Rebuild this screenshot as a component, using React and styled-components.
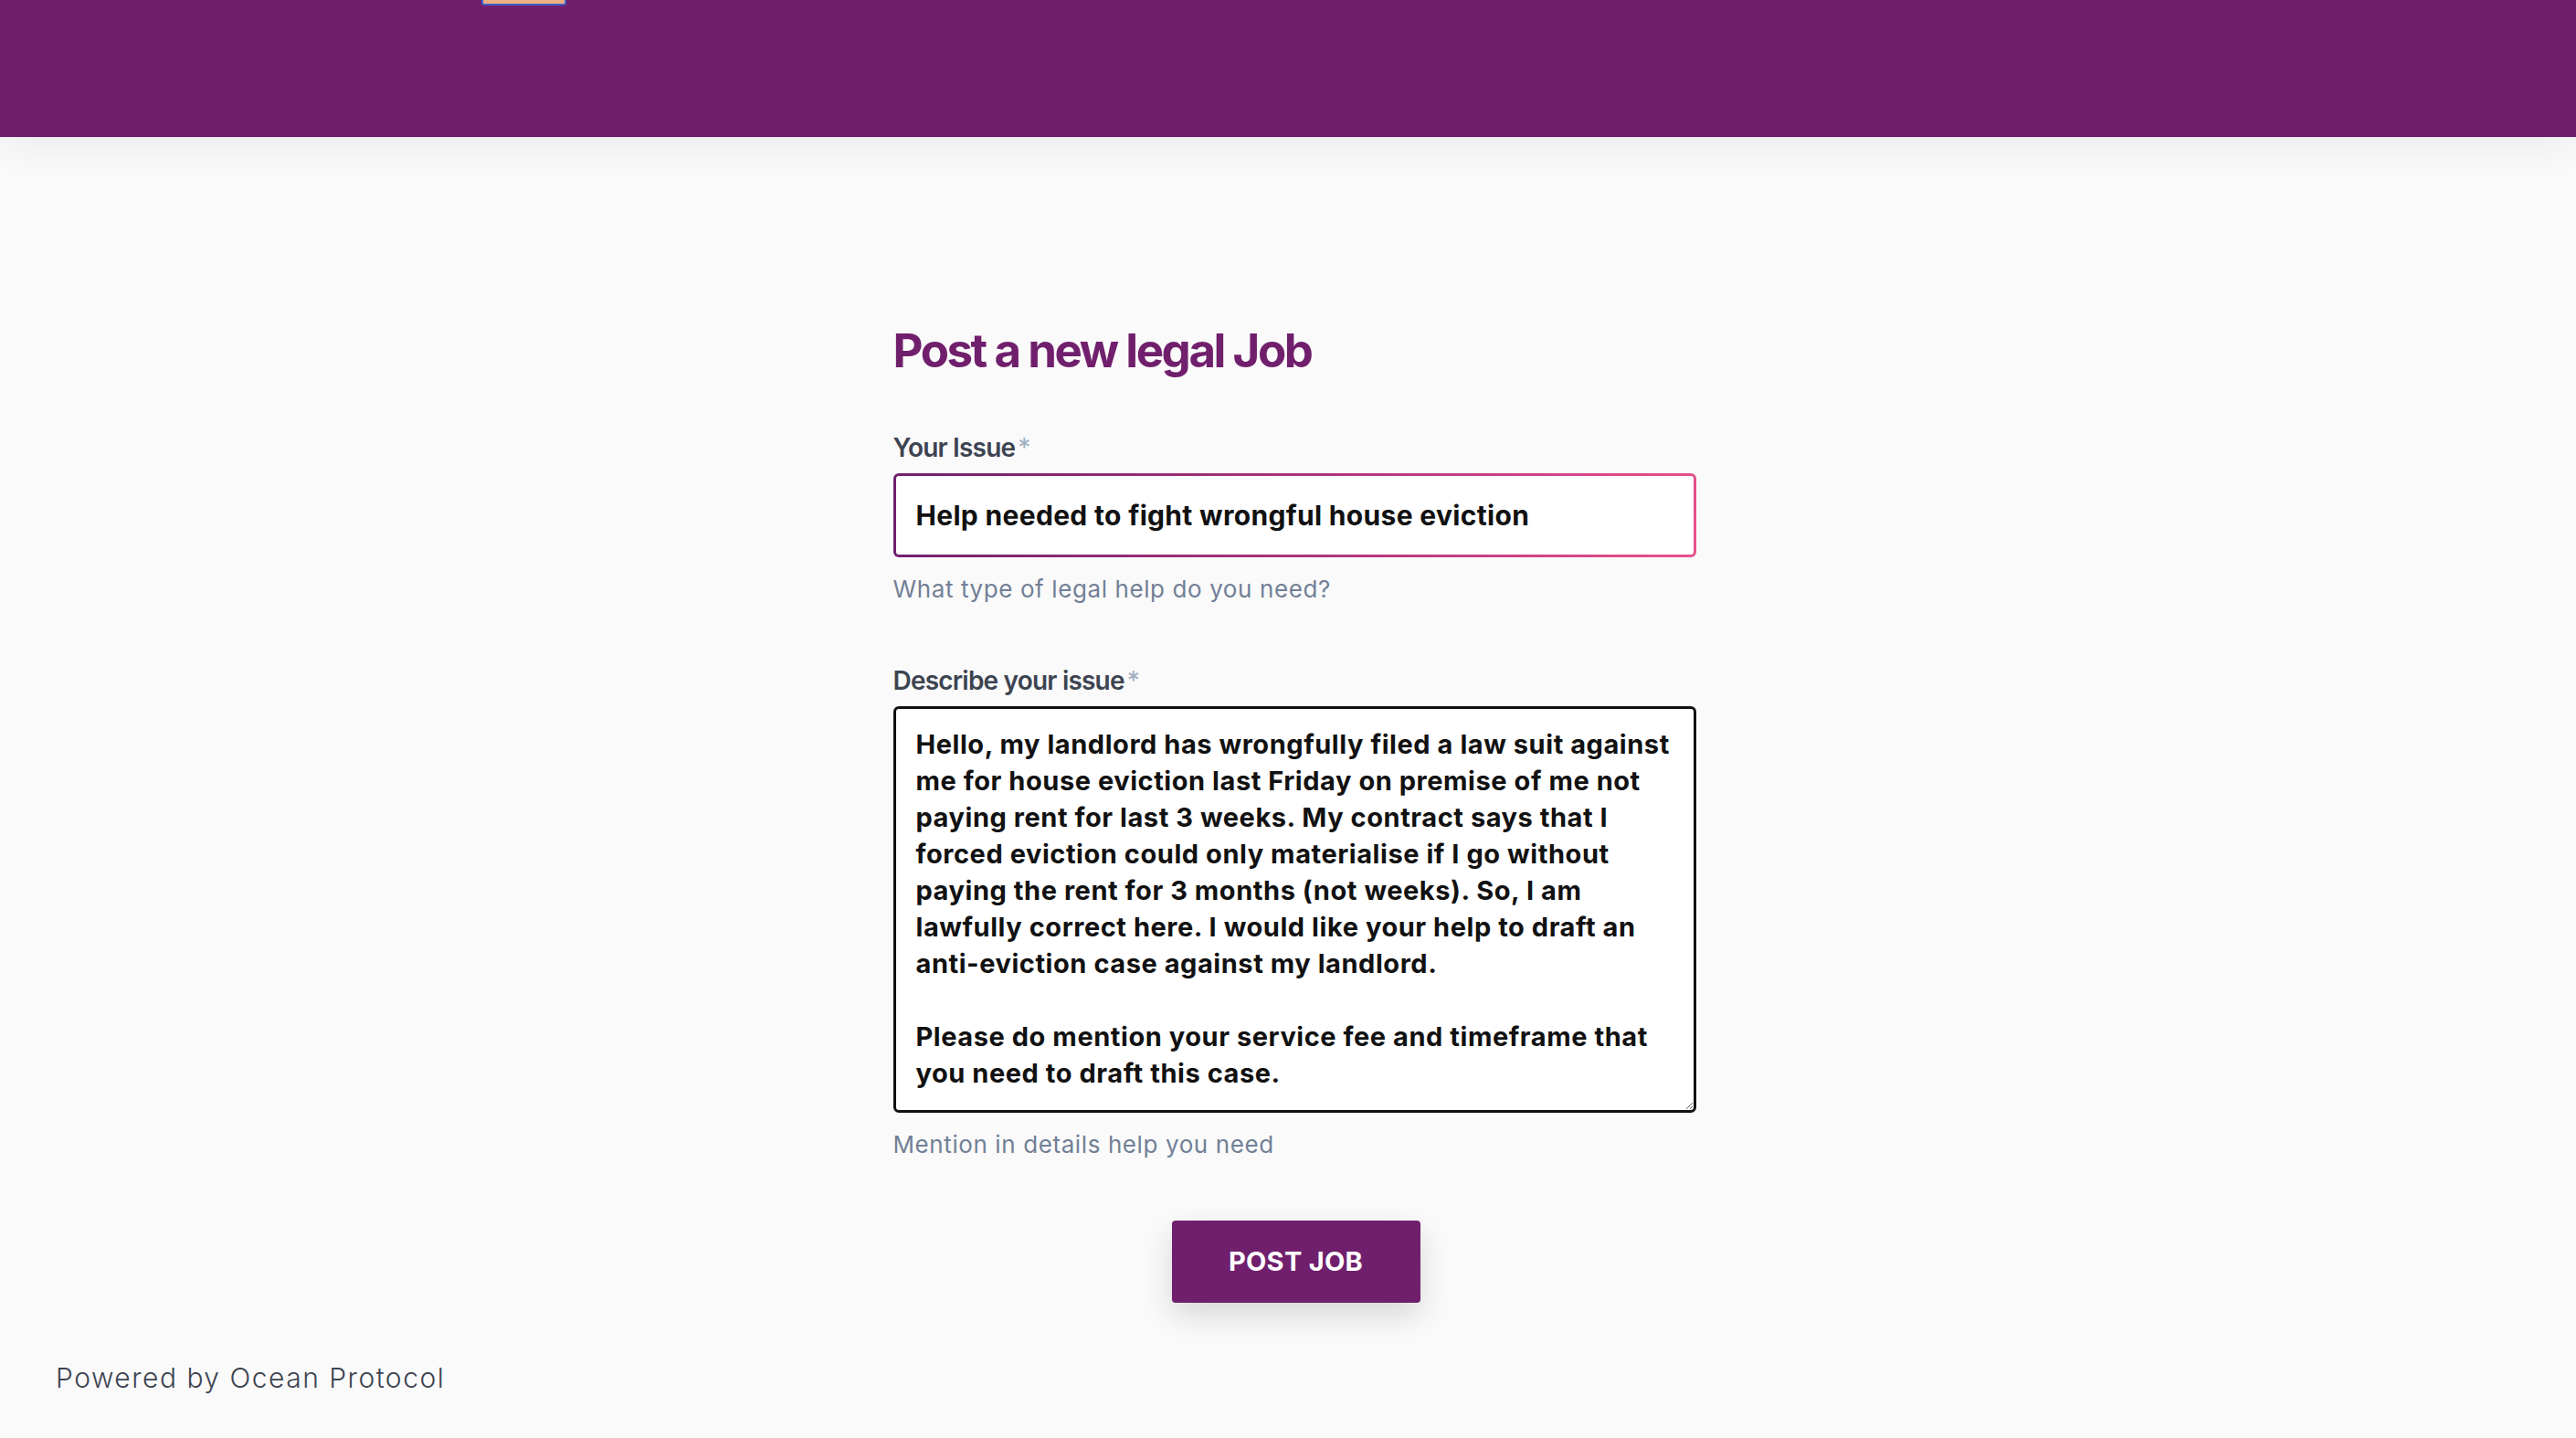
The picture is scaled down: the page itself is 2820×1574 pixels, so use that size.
import React from "react";
import styled, { createGlobalStyle } from "styled-components";

const Global = createGlobalStyle`
  html, body { margin: 0; padding: 0; }
  body {
    background: #fafafa;
    font-family: Inter, Lato, "Noto Sans", sans-serif;
    color: #1a1a1a;
  }
  * { box-sizing: border-box; }
`;

const Page = styled.div`
  min-height: 1574px;
  display: flex;
  flex-direction: column;
`;

const Header = styled.header`
  height: 150px;
  background: #701f6d;
  box-shadow: 0 12px 40px rgba(0, 0, 0, 0.06);
  display: flex;
  align-items: flex-start;
  position: relative;
  z-index: 1;
`;

const FocusedNav = styled.div`
  margin-left: 527px;
  width: 93px;
  height: 6px;
  border: 2px solid #3f62c7;
  border-top: none;
  border-radius: 0 0 3px 3px;
  background: #efb184;
`;

const Main = styled.main`
  flex: 1;
  display: flex;
  justify-content: center;
  padding: 203px 0 0 14px;
`;

const Form = styled.form`
  width: 879px;
  display: flex;
  flex-direction: column;
`;

const Title = styled.h1`
  margin: 0 0 59px;
  font-size: 51px;
  line-height: 1.2;
  font-weight: 700;
  color: #701f6d;
  letter-spacing: -2.45px;
`;

const Field = styled.div`
  display: flex;
  flex-direction: column;
  margin-bottom: ${(p) => p.$gap || 0}px;
`;

const Label = styled.label`
  font-size: 28px;
  line-height: 1.25;
  font-weight: 600;
  color: #3d4451;
  margin-bottom: 10px;
  letter-spacing: -0.8px;
`;

const Star = styled.span`
  color: #a0aec0;
  font-weight: 400;
  margin-left: 3px;
`;

const TextInput = styled.input`
  height: 92px;
  width: 100%;
  padding: 0 22px;
  border: 3px solid transparent;
  border-radius: 6px;
  background: linear-gradient(#ffffff, #ffffff) padding-box,
    linear-gradient(100deg, #701f6d 0%, #b0357c 55%, #e9508e 100%) border-box;
  font-family: inherit;
  font-size: 30px;
  font-weight: 700;
  color: #111111;
  outline: none;
  letter-spacing: 0.32px;
`;

const TextArea = styled.textarea`
  width: 100%;
  height: 445px;
  padding: 19px 14px 19px 22px;
  border: 3px solid #111111;
  border-radius: 6px;
  background: #ffffff;
  font-family: inherit;
  font-size: 29px;
  line-height: 40px;
  font-weight: 700;
  color: #111111;
  outline: none;
  resize: vertical;
  letter-spacing: 0.55px;
`;

const Help = styled.p`
  margin: 19px 0 0;
  font-size: 26px;
  line-height: 1.2;
  color: #718096;
  font-weight: 400;
  letter-spacing: 0.6px;
`;

const Actions = styled.div`
  display: flex;
  justify-content: center;
  padding-left: 3px;
`;

const Button = styled.button`
  width: 272px;
  height: 90px;
  border: none;
  border-radius: 4px;
  background: #701f6d;
  color: #ffffff;
  font-family: inherit;
  font-size: 29px;
  font-weight: 700;
  letter-spacing: 0.3px;
  text-transform: uppercase;
  box-shadow: 0 14px 34px rgba(0, 0, 0, 0.14);
  cursor: pointer;
`;

const Footer = styled.footer`
  padding: 64px 0 50px 61px;
  font-size: 30px;
  line-height: 1.2;
  color: #3d4451;
  font-weight: 300;
  letter-spacing: 1.5px;
`;

const description =
  "Hello, my landlord has wrongfully filed a law suit against me for house eviction last Friday on premise of me not paying rent for last 3 weeks. My contract says that I forced eviction could only materialise if I go without paying the rent for 3 months (not weeks). So, I am lawfully correct here. I would like your help to draft an anti-eviction case against my landlord.\n\nPlease do mention your service fee and timeframe that you need to draft this case.";

export default function App() {
  return (
    <Page>
      <Global />
      <Header>
        <FocusedNav />
      </Header>
      <Main>
        <Form onSubmit={(e) => e.preventDefault()}>
          <Title>Post a new legal Job</Title>
          <Field $gap={68}>
            <Label htmlFor="issue">
              Your Issue<Star>*</Star>
            </Label>
            <TextInput
              id="issue"
              defaultValue="Help needed to fight wrongful house eviction"
            />
            <Help>What type of legal help do you need?</Help>
          </Field>
          <Field $gap={67}>
            <Label htmlFor="desc">
              Describe your issue<Star>*</Star>
            </Label>
            <TextArea id="desc" defaultValue={description} />
            <Help>Mention in details help you need</Help>
          </Field>
          <Actions>
            <Button type="submit">Post Job</Button>
          </Actions>
        </Form>
      </Main>
      <Footer>Powered by Ocean Protocol</Footer>
    </Page>
  );
}
